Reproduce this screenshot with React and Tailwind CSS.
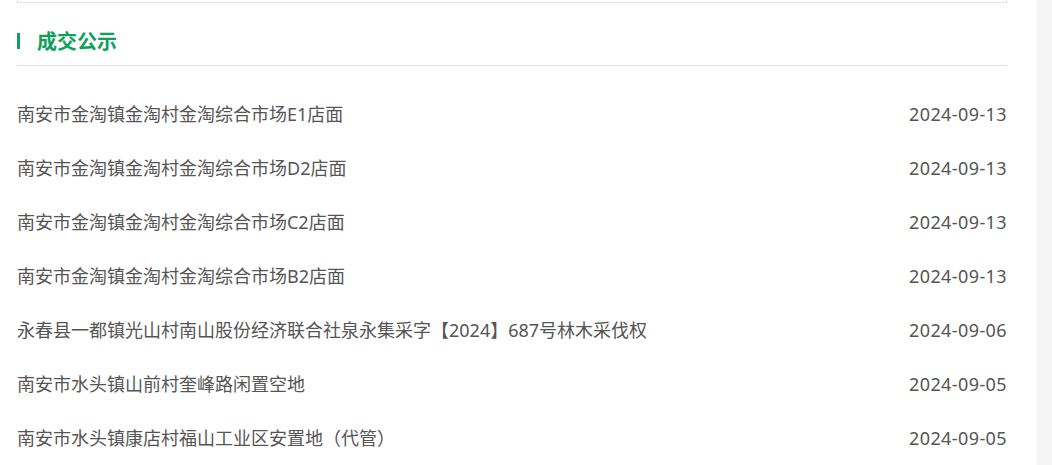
const rows = [
  ['南安市金淘镇金淘村金淘综合市场E1店面', '2024-09-13'],
  ['南安市金淘镇金淘村金淘综合市场D2店面', '2024-09-13'],
  ['南安市金淘镇金淘村金淘综合市场C2店面', '2024-09-13'],
  ['南安市金淘镇金淘村金淘综合市场B2店面', '2024-09-13'],
  ['永春县一都镇光山村南山股份经济联合社泉永集采字【2024】687号林木采伐权', '2024-09-06'],
  ['南安市水头镇山前村奎峰路闲置空地', '2024-09-05'],
  ['南安市水头镇康店村福山工业区安置地（代管）', '2024-09-05'],
];

export default function App() {
  return (
    <div
      className="flex h-[465px] w-[1052px] overflow-hidden bg-[#f5f5f5]"
      style={{ fontFamily: '"Noto Sans", "Noto Sans CJK SC", sans-serif' }}
    >
      <div className="h-full w-[1037px] bg-white pl-[17px] pr-[30px]">
        <div className="h-[3px] border-x border-b border-[#e3e3e3]" />

        <div className="mt-[28px] flex h-[35px] items-start border-b border-[#e0e0e0]">
          <div className="mt-[2px] h-[16px] w-[3px] bg-[#0fa05a]" />
          <h2 className="ml-[17px] text-[20px] font-bold leading-[22px] text-[#0fa05a]">成交公示</h2>
        </div>

        <ul className="pt-[21px]">
          {rows.map(([title, date], i) => (
            <li key={i} className="flex h-[54px] items-center justify-between text-[18px] text-[#555]">
              <span>{title}</span>
              <span className="tracking-[0.4px]">{date}</span>
            </li>
          ))}
        </ul>
      </div>
    </div>
  );
}
